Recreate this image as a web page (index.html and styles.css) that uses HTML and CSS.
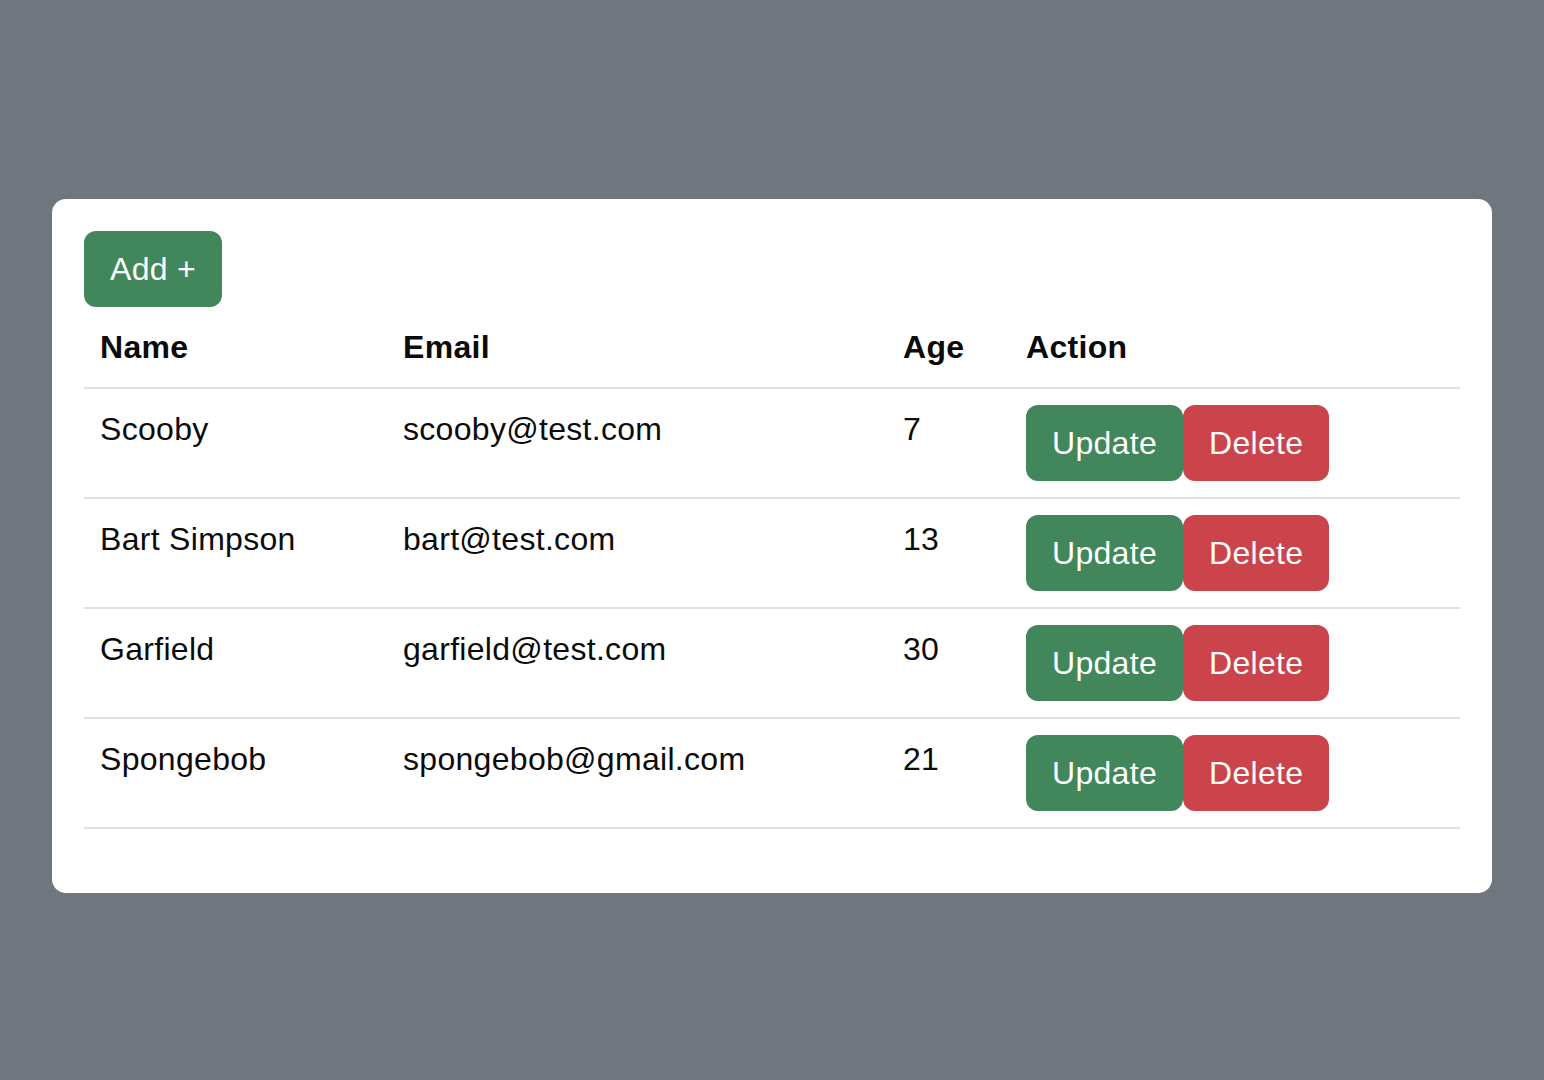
FILE: index.html
```html
<!DOCTYPE html>
<html lang="en">
<head>
<meta charset="utf-8">
<title>Users</title>
<link rel="stylesheet" href="styles.css">
</head>
<body>
<div class="card">
  <button class="btn btn-success">Add +</button>
  <table class="table">
    <colgroup>
      <col class="c-name"><col class="c-email"><col class="c-age"><col class="c-action">
    </colgroup>
    <thead>
      <tr><th>Name</th><th>Email</th><th>Age</th><th>Action</th></tr>
    </thead>
    <tbody>
      <tr><td>Scooby</td><td>scooby@test.com</td><td>7</td><td><button class="btn btn-success">Update</button><button class="btn btn-danger">Delete</button></td></tr>
      <tr><td>Bart Simpson</td><td>bart@test.com</td><td>13</td><td><button class="btn btn-success">Update</button><button class="btn btn-danger">Delete</button></td></tr>
      <tr><td>Garfield</td><td>garfield@test.com</td><td>30</td><td><button class="btn btn-success">Update</button><button class="btn btn-danger">Delete</button></td></tr>
      <tr><td>Spongebob</td><td>spongebob@gmail.com</td><td>21</td><td><button class="btn btn-success">Update</button><button class="btn btn-danger">Delete</button></td></tr>
    </tbody>
  </table>
</div>
</body>
</html>
```
FILE: styles.css
```css
* { box-sizing: border-box; }
html, body { height: 100%; }
body {
  margin: 0;
  background: #6f767e;
  font-family: "Liberation Sans", Arial, Helvetica, sans-serif;
  font-size: 32px;
  line-height: 48px;
  letter-spacing: 0.3px;
  color: #0b0b0b;
  display: flex;
  justify-content: center;
  align-items: center;
}
.card {
  width: 1440px;
  margin-top: 12px;
  background: #fff;
  border-radius: 14px;
  padding: 32px;
}
.btn {
  display: inline-block;
  font-family: inherit;
  font-size: 32px;
  line-height: 48px;
  letter-spacing: 0.3px;
  padding: 12px 24px;
  border: 2px solid transparent;
  border-radius: 12px;
  color: #fff;
  cursor: pointer;
  vertical-align: top;
  margin: 0;
}
.btn-success { background: #42875b; border-color: #42875b; }
.btn-danger { background: #cb444b; border-color: #cb444b; }
.table {
  width: 100%;
  border-collapse: collapse;
  margin-bottom: 32px;
  vertical-align: top;
  table-layout: fixed;
}
.c-name { width: 303px; }
.c-email { width: 500px; }
.c-age { width: 123px; }
.c-action { width: 450px; }
.table th, .table td {
  padding: 16px;
  text-align: left;
  vertical-align: top;
  border-bottom: 2px solid #dee2e6;
  white-space: nowrap;
}
.table th { font-weight: bold; }
```
